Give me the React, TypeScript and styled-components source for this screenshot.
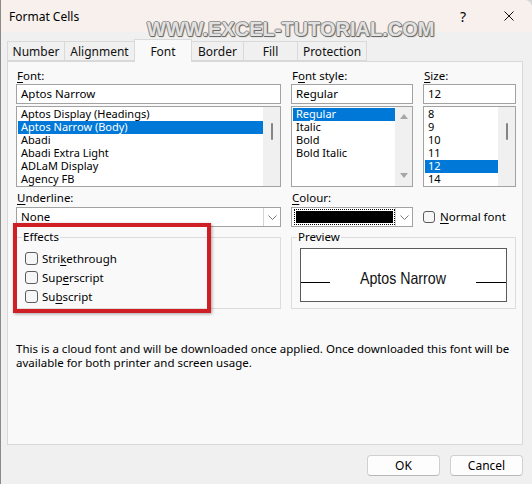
import React from "react";
import styled, { createGlobalStyle } from "styled-components";

const GlobalStyle = createGlobalStyle`
  * { box-sizing: border-box; }
  html, body { margin: 0; padding: 0; background: #d6d6d6; }
  body {
    font-family: "Segoe UI", "Noto Sans", sans-serif;
    font-size: 11.5px;
    color: #000;
  }
`;

const Window = styled.div`
  position: relative;
  width: 532px;
  height: 484px;
  display: flex;
  flex-direction: column;
  background: #f0f0f0;
  border-left: 1px solid #8a8a8a;
  border-top-right-radius: 8px;
  overflow: hidden;
`;

const TitleBar = styled.div`
  height: 32px;
  flex: none;
  display: flex;
  align-items: center;
  padding-left: 8px;
  background: #f7f0ed;
`;

const Title = styled.div`
  flex: 1;
  font-size: 12px;
`;

const CaptionButton = styled.div`
  width: 46px;
  height: 32px;
  display: flex;
  align-items: center;
  justify-content: center;
  font-size: 14px;
`;

const Watermark = styled.div`
  position: absolute;
  left: 146px;
  top: 19px;
  font-family: "Liberation Sans", Arial, sans-serif;
  font-weight: 700;
  font-size: 20px;
  line-height: 20px;
  color: #e2e2e2;
  white-space: nowrap;
  pointer-events: none;
  text-shadow: 1px 0 0 #777, -1px 0 0 #8a8a8a, 0 1px 0 #6a6a6a,
    0 -1px 0 #9a9a9a, 1px 1px 1px #666;
`;

const Body = styled.div`
  flex: 1;
  display: flex;
  flex-direction: column;
  padding: 7px 9px 8px 6px;
`;

const TabRow = styled.div`
  display: flex;
  align-items: flex-end;
  height: 22px;
  padding-left: 1px;
  position: relative;
  z-index: 1;
`;

const Tab = styled.div<{ $w: number; $active?: boolean }>`
  width: ${(p) => p.$w}px;
  height: ${(p) => (p.$active ? 23 : 20)}px;
  margin-left: -1px;
  margin-bottom: ${(p) => (p.$active ? -1 : 0)}px;
  display: flex;
  align-items: center;
  justify-content: center;
  padding-top: ${(p) => (p.$active ? 0 : 1)}px;
  border: 1px solid #d9d9d9;
  border-bottom: ${(p) => (p.$active ? "none" : "1px solid #d9d9d9")};
  background: ${(p) => (p.$active ? "#f9f9f9" : "#f0f0f0")};
  font-size: 12px;
  color: #111;
`;

const Panel = styled.div`
  flex: 1;
  background: #f9f9f9;
  border: 1px solid #d9d9d9;
  padding: 6px 6px 0 8px;
`;

const Grid = styled.div`
  display: grid;
  grid-template-columns: 265px 122px 93px;
  column-gap: 10px;
  row-gap: 3px;
`;

const Field = styled.div`
  display: flex;
  flex-direction: column;
`;

const Label = styled.div`
  height: 16px;
  line-height: 16px;
  padding-left: 1px;
`;

const Key = styled.span`
  text-decoration: underline;
  text-underline-offset: 2px;
`;

const TextBox = styled.div`
  height: 20px;
  border: 1px solid #a2a2a2;
  background: #fff;
  padding-left: 4px;
  line-height: 18px;
`;

const ListBox = styled.div`
  margin-top: 2px;
  height: 81px;
  border: 1px solid #a2a2a2;
  background: #fff;
  display: flex;
`;

const Items = styled.div`
  flex: 1;
  padding: 1px 0 0 1px;
  overflow: hidden;
`;

const Item = styled.div<{ $selected?: boolean }>`
  height: 13px;
  line-height: 12px;
  font-size: 11px;
  padding-left: 3px;
  white-space: nowrap;
  background: ${(p) => (p.$selected ? "#0078d7" : "transparent")};
  color: ${(p) => (p.$selected ? "#fff" : "#000")};
`;

const ScrollBar = styled.div<{ $arrows?: boolean }>`
  width: 17px;
  background: #f0f0f0;
  display: flex;
  flex-direction: column;
  align-items: center;
  justify-content: ${(p) => (p.$arrows ? "space-between" : "flex-start")};
  padding: ${(p) => (p.$arrows ? "7px 0 8px" : "16px 0 0")};
`;

const Thumb = styled.div`
  width: 2px;
  height: 17px;
  border-radius: 1px;
  background: #858585;
`;

const Arrow = styled.div<{ $down?: boolean }>`
  width: 0;
  height: 0;
  border-left: 4px solid transparent;
  border-right: 4px solid transparent;
  ${(p) =>
    p.$down ? "border-top: 5px solid #a6a6a6;" : "border-bottom: 5px solid #a6a6a6;"}
`;

const Select = styled.div`
  margin-top: 1px;
  height: 20px;
  border: 1px solid #a2a2a2;
  background: #fff;
  display: flex;
`;

const SelectValue = styled.div`
  flex: 1;
  padding-left: 4px;
  line-height: 18px;
`;

const ColourValue = styled.div`
  flex: 1;
  margin: 1px 0 1px 2px;
  border: 1px dotted #000;
  padding: 1px;
  display: flex;
`;

const Swatch = styled.div`
  flex: 1;
  background: #000;
`;

const DropButton = styled.div`
  width: 17px;
  border-left: 1px solid #d4d4d4;
  display: flex;
  align-items: center;
  justify-content: center;
`;

const CheckRow = styled.label<{ $h: number }>`
  height: ${(p) => p.$h}px;
  display: flex;
  align-items: center;
  gap: 4px;
`;

const Check = styled.span<{ $size: number }>`
  width: ${(p) => p.$size}px;
  height: ${(p) => p.$size}px;
  border: 1px solid #5c5c5c;
  border-radius: 3px;
  background: #f6f6f6;
  flex: none;
`;

const NormalFont = styled.div`
  align-self: end;
  height: 20px;
  display: flex;
  align-items: center;
  padding-bottom: 1px;
  gap: 5px;
`;

const Group = styled.fieldset<{ $span?: boolean }>`
  margin: 0;
  border: 1px solid #dcdcdc;
  padding: 5px 8px 2px 8px;
  min-width: 0;
  ${(p) => (p.$span ? "grid-column: 2 / span 2;" : "")}
`;

const Legend = styled.legend`
  padding: 0 1px;
  margin-left: -3px;
  line-height: 14px;
`;

const Annotated = styled.div`
  position: relative;
  display: flex;
  flex-direction: column;
`;

const Highlight = styled.div`
  position: absolute;
  left: -3px;
  top: -7px;
  width: 198px;
  height: 90px;
  border: 4px solid #cf1f25;
  box-shadow: 1px 1px 3px rgba(0, 0, 0, 0.35);
  pointer-events: none;
`;

const PreviewBox = styled.div`
  height: 54px;
  margin-top: -1px;
  margin-bottom: 2px;
  border: 1px solid #5a5a5a;
  background: #fff;
  display: flex;
  align-items: center;
  justify-content: space-between;
`;

const PreviewText = styled.div`
  font-family: "Liberation Sans Narrow", "Liberation Sans", Arial, sans-serif;
  font-size: 16.5px;
  line-height: 18px;
  padding-top: 6px;
  color: #111;
  transform: scaleX(0.86);
`;

const BaseLine = styled.div<{ $w: number }>`
  width: ${(p) => p.$w}px;
  height: 1px;
  margin-top: 14px;
  background: #000;
`;

const Info = styled.p`
  margin: 33px 0 0;
  line-height: 14.3px;
  font-size: 11.5px;
  white-space: nowrap;
`;

const ButtonRow = styled.div`
  margin-top: 10px;
  display: flex;
  justify-content: flex-end;
  gap: 10px;
`;

const Button = styled.button`
  width: 73px;
  height: 21px;
  border: 1px solid #d0d0d0;
  border-bottom-color: #b8b8b8;
  border-radius: 4px;
  background: #fdfdfd;
  font: inherit;
  font-size: 12px;
  color: #000;
  padding: 0;
`;

const Chevron = () => (
  <svg width="9" height="5" viewBox="0 0 9 5">
    <path d="M0.5 0.5 L4.5 4.5 L8.5 0.5" fill="none" stroke="#7a7a7a" strokeWidth="1" />
  </svg>
);

const CloseIcon = () => (
  <svg width="10" height="10" viewBox="0 0 10 10">
    <path d="M0.5 0.5 L9.5 9.5 M9.5 0.5 L0.5 9.5" stroke="#111" strokeWidth="1" />
  </svg>
);

const tabs = [
  { name: "Number", w: 58 },
  { name: "Alignment", w: 71 },
  { name: "Font", w: 58, active: true },
  { name: "Border", w: 53 },
  { name: "Fill", w: 55 },
  { name: "Protection", w: 70 },
];

const fonts = [
  "Aptos Display (Headings)",
  "Aptos Narrow (Body)",
  "Abadi",
  "Abadi Extra Light",
  "ADLaM Display",
  "Agency FB",
];
const styles = ["Regular", "Italic", "Bold", "Bold Italic"];
const sizes = ["8", "9", "10", "11", "12", "14"];

export default function App() {
  return (
    <>
      <GlobalStyle />
      <Window>
        <TitleBar>
          <Title>Format Cells</Title>
          <CaptionButton>?</CaptionButton>
          <CaptionButton>
            <CloseIcon />
          </CaptionButton>
        </TitleBar>
        <Watermark>WWW.EXCEL-TUTORIAL.COM</Watermark>

        <Body>
          <TabRow>
            {tabs.map((t) => (
              <Tab key={t.name} $w={t.w} $active={t.active}>
                {t.name}
              </Tab>
            ))}
          </TabRow>

          <Panel>
            <Grid>
              <Field>
                <Label>
                  <Key>F</Key>ont:
                </Label>
                <TextBox>Aptos Narrow</TextBox>
                <ListBox>
                  <Items>
                    {fonts.map((f, i) => (
                      <Item key={f} $selected={i === 1}>
                        {f}
                      </Item>
                    ))}
                  </Items>
                  <ScrollBar>
                    <Thumb />
                  </ScrollBar>
                </ListBox>
              </Field>

              <Field>
                <Label>
                  F<Key>o</Key>nt style:
                </Label>
                <TextBox>Regular</TextBox>
                <ListBox>
                  <Items>
                    {styles.map((s, i) => (
                      <Item key={s} $selected={i === 0}>
                        {s}
                      </Item>
                    ))}
                  </Items>
                  <ScrollBar $arrows>
                    <Arrow />
                    <Arrow $down />
                  </ScrollBar>
                </ListBox>
              </Field>

              <Field>
                <Label>
                  <Key>S</Key>ize:
                </Label>
                <TextBox>12</TextBox>
                <ListBox>
                  <Items>
                    {sizes.map((s) => (
                      <Item key={s} $selected={s === "12"}>
                        {s}
                      </Item>
                    ))}
                  </Items>
                  <ScrollBar>
                    <Thumb />
                  </ScrollBar>
                </ListBox>
              </Field>

              <Field>
                <Label>
                  <Key>U</Key>nderline:
                </Label>
                <Select>
                  <SelectValue>None</SelectValue>
                  <DropButton>
                    <Chevron />
                  </DropButton>
                </Select>
              </Field>

              <Field>
                <Label>
                  <Key>C</Key>olour:
                </Label>
                <Select>
                  <ColourValue>
                    <Swatch />
                  </ColourValue>
                  <DropButton>
                    <Chevron />
                  </DropButton>
                </Select>
              </Field>

              <NormalFont>
                <Check $size={12} />
                <span>
                  <Key>N</Key>ormal font
                </span>
              </NormalFont>

              <Annotated>
                <Group>
                  <Legend>Effects</Legend>
                  <CheckRow $h={19}>
                    <Check $size={13} />
                    <span>
                      Stri<Key>k</Key>ethrough
                    </span>
                  </CheckRow>
                  <CheckRow $h={19}>
                    <Check $size={13} />
                    <span>
                      Sup<Key>e</Key>rscript
                    </span>
                  </CheckRow>
                  <CheckRow $h={19}>
                    <Check $size={13} />
                    <span>
                      Su<Key>b</Key>script
                    </span>
                  </CheckRow>
                </Group>
                <Highlight />
              </Annotated>

              <Group $span>
                <Legend>Preview</Legend>
                <PreviewBox>
                  <BaseLine $w={29} />
                  <PreviewText>Aptos Narrow</PreviewText>
                  <BaseLine $w={30} />
                </PreviewBox>
              </Group>
            </Grid>

            <Info>
              This is a cloud font and will be downloaded once applied. Once downloaded this font will be
              <br />
              available for both printer and screen usage.
            </Info>
          </Panel>

          <ButtonRow>
            <Button>OK</Button>
            <Button>Cancel</Button>
          </ButtonRow>
        </Body>
      </Window>
    </>
  );
}
